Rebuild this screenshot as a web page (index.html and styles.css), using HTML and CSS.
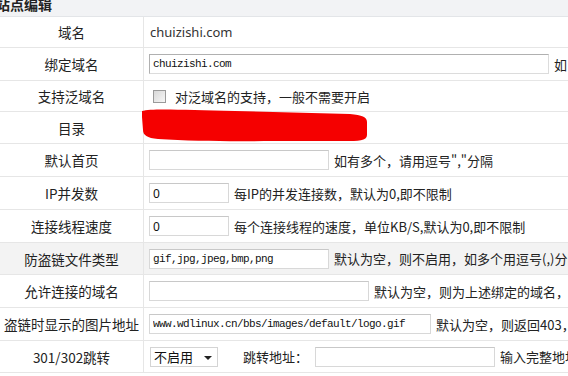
FILE: index.html
```html
<!DOCTYPE html>
<html lang="zh-CN">
<head>
<meta charset="utf-8">
<title>站点编辑</title>
<link rel="stylesheet" href="styles.css">
</head>
<body>
<div class="page">
  <div class="title">站点编辑</div>
  <div class="form">
    <div class="row h31">
      <div class="label">域名</div>
      <div class="cell"><span class="domain">chuizishi.com</span></div>
    </div>
    <div class="row h33">
      <div class="label">绑定域名</div>
      <div class="cell"><input class="inp w400 dark" value="chuizishi.com"><span class="hint">如</span></div>
    </div>
    <div class="row h31">
      <div class="label">支持泛域名</div>
      <div class="cell"><span class="check"></span><span class="hint chk">对泛域名的支持，一般不需要开启</span></div>
    </div>
    <div class="row h32">
      <div class="label">目录</div>
      <div class="cell redact-cell">
        <svg class="redact" width="232" height="38" viewBox="0 0 232 38"><path d="M2,3 C12,0 45,2 95,3 L210,6 C222,7 227,9 227,14 L227,27 C227,33 218,33 205,33 L150,33 C115,33 60,34 18,31 C7,30 3,27 3,22 L2,9 Z" fill="#f50000"/></svg>
      </div>
    </div>
    <div class="row h33">
      <div class="label">默认首页</div>
      <div class="cell"><input class="inp w180"><span class="hint">如有多个，请用逗号","分隔</span></div>
    </div>
    <div class="row h33">
      <div class="label">IP并发数</div>
      <div class="cell"><input class="inp w80" value="0"><span class="hint">每IP的并发连接数，默认为0,即不限制</span></div>
    </div>
    <div class="row h33">
      <div class="label">连接线程速度</div>
      <div class="cell"><input class="inp w80" value="0"><span class="hint">每个连接线程的速度，单位KB/S,默认为0,即不限制</span></div>
    </div>
    <div class="row h32 hl">
      <div class="label">防盗链文件类型</div>
      <div class="cell"><input class="inp w180" value="gif,jpg,jpeg,bmp,png"><span class="hint">默认为空，则不启用，如多个用逗号(,)分隔</span></div>
    </div>
    <div class="row h33">
      <div class="label">允许连接的域名</div>
      <div class="cell"><input class="inp w220"><span class="hint">默认为空，则为上述绑定的域名，</span></div>
    </div>
    <div class="row h33">
      <div class="label">盗链时显示的图片地址</div>
      <div class="cell"><input class="inp w282" value="www.wdlinux.cn/bbs/images/default/logo.gif"><span class="hint">默认为空，则返回403，</span></div>
    </div>
    <div class="row h32">
      <div class="label">301/302跳转</div>
      <div class="cell"><span class="select">不启用<span class="caret"></span></span><span class="hint jump">跳转地址：</span><input class="inp w180 jin"><span class="hint">输入完整地址</span></div>
    </div>
  </div>
</div>
</body>
</html>
```
FILE: styles.css
```css
html, body {
  margin: 0;
  padding: 0;
  background: #fff;
  overflow: hidden;
}
body {
  width: 568px;
  height: 376px;
  font-family: "Noto Sans CJK SC", "Noto Sans", sans-serif;
  color: #222;
}
.page {
  width: 568px;
}
.title {
  height: 16px;
  background: #f2f3f5;
  border-bottom: 1px solid #e3e5e8;
  font-size: 14px;
  font-weight: bold;
  line-height: 8px;
  text-indent: -4px;
  color: #222;
  overflow: hidden;
}
.form {
  display: flex;
  flex-direction: column;
}
.row {
  display: flex;
  border-bottom: 1px solid #e6e6e6;
  box-sizing: border-box;
  white-space: nowrap;
}
.h31 { height: 31px; }
.h32 { height: 32px; }
.h33 { height: 33px; }
.row.hl { background: #f3f3f3; }
.label {
  width: 143px;
  flex: none;
  border-right: 1px solid #e6e6e6;
  display: flex;
  align-items: center;
  justify-content: center;
  font-size: 13.5px;
  color: #222;
}
.cell {
  flex: 1;
  display: flex;
  align-items: center;
  padding-left: 5px;
  font-size: 13px;
  min-width: 0;
  overflow: visible;
}
.domain {
  font-family: "Noto Sans", sans-serif;
  font-size: 13px;
  color: #333;
  margin-left: 1px;
}
.inp {
  flex: none;
  height: 20px;
  box-sizing: border-box;
  border: 1px solid #d8d8d8;
  border-top-color: #c8c8c8;
  background: #fff;
  font-family: "Liberation Mono", monospace;
  font-size: 11px;
  letter-spacing: -0.6px;
  color: #111;
  padding: 0 3px;
  margin: 0;
  outline: none;
}
.inp.dark {
  border-color: #b0b0b0 #dcdcdc #dcdcdc #b0b0b0;
}
.w80 { width: 80px; font-family: "Noto Sans", sans-serif; font-size: 12px; letter-spacing: 0; }
.w180 { width: 180px; }
.w220 { width: 220px; }
.w282 { width: 282px; }
.w400 { width: 400px; }
.hint {
  flex: none;
  margin-left: 5px;
  font-size: 13px;
  color: #222;
}
.check {
  width: 11px;
  height: 11px;
  border: 1px solid #9a9a9a;
  background: linear-gradient(135deg, #d8d8d8, #f6f6f6);
  margin-left: 4px;
  flex: none;
}
.hint.chk { margin-left: 9px; }
.redact-cell { position: relative; }
.redact {
  position: absolute;
  left: -4px;
  top: -4px;
}
.select {
  flex: none;
  position: relative;
  box-sizing: border-box;
  width: 68px;
  height: 20px;
  border: 1px solid #d4d4d4;
  background: #fff;
  font-size: 13px;
  line-height: 18px;
  padding-left: 3px;
  margin-left: 1px;
  color: #111;
}
.caret {
  position: absolute;
  right: 5px;
  top: 8px;
  width: 0;
  height: 0;
  border-left: 4px solid transparent;
  border-right: 4px solid transparent;
  border-top: 4px solid #222;
}
.hint.jump { margin-left: 25px; }
.inp.jin { margin-left: 7px; }
```
